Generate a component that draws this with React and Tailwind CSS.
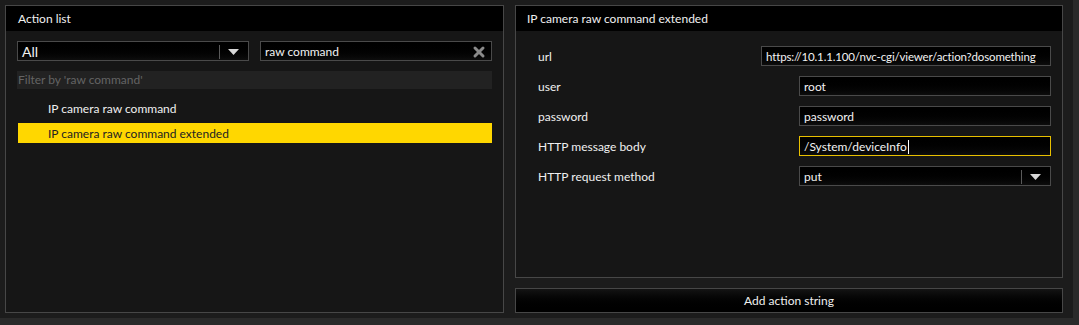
import { X } from "lucide-react";

const font = { fontFamily: 'Lato, "Noto Sans", sans-serif' };

function Caret() {
  return (
    <svg width="11" height="6" viewBox="0 0 11 6" className="block">
      <path d="M0 0 H11 L5.5 6 Z" fill="#d8d8d8" />
    </svg>
  );
}

function Field({ label, children }) {
  return (
    <div className="flex items-center h-[20px] mb-[10px]">
      <span className="pl-[22px] flex-1 pt-[1px]">{label}</span>
      {children}
    </div>
  );
}

const inputCls =
  "h-[20px] border border-[#4a4a4a] bg-gradient-to-b from-[#000] to-[#0d0d0d] flex items-center px-[4px] pt-[1px] text-[#f2f2f2] whitespace-nowrap overflow-hidden";

export default function App() {
  return (
    <div
      className="w-[1079px] h-[325px] bg-[#1c1c1c] flex flex-col text-[12px] text-[#f0f0f0] overflow-hidden"
      style={font}
    >
      <div className="flex h-[318px]">
        {/* LEFT PANEL */}
        <div className="ml-[5px] mt-[5px] mb-[5px] w-[499px] border border-[#474747] bg-[#161616] flex flex-col">
          <div className="h-[25px] bg-black flex items-center pl-[12px] pt-[1px]">Action list</div>

          <div className="flex gap-[11px] pl-[11px] pr-[11px] mt-[10px]">
            <div className={`${inputCls} w-[233px] justify-between`}>
              <span className="text-[14px]">All</span>
              <div className="flex items-center h-full">
                <div className="w-px h-[14px] bg-[#5a5a5a] mr-[8px]" />
                <Caret />
                <div className="w-[5px]" />
              </div>
            </div>
            <div className={`${inputCls} w-[233px] justify-between`}>
              <span>raw command</span>
              <X size={16} strokeWidth={4.5} color="#8a8a8a" />
            </div>
          </div>

          <div className="mx-[11px] mt-[10px] h-[18px] bg-[#222222] flex items-center pl-[1px] text-[#646464]">
            Filter by 'raw command'
          </div>

          <div className="mx-[12px] mt-[9px] h-[20px] flex items-center pl-[30px] pt-[1px]">IP camera raw command</div>
          <div className="ml-[12px] mr-[11px] mt-[5px] h-[20px] bg-[#ffd700] flex items-center pl-[30px] pt-[1px] text-[#222]">
            IP camera raw command extended
          </div>
        </div>

        {/* RIGHT COLUMN */}
        <div className="ml-[11px] mt-[5px] w-[548px] flex flex-col">
          <div className="h-[273px] border border-[#474747] bg-[#161616] flex flex-col">
            <div className="h-[25px] bg-black flex items-center pl-[11px] pt-[1px]">IP camera raw command extended</div>
            <div className="pt-[15px] pr-[11px]">
              <Field label="url">
                <div className={`${inputCls} w-[290px] text-[11.5px] tracking-[-0.15px]`}>
                  https://10.1.1.100/nvc-cgi/viewer/action?dosomething
                </div>
              </Field>
              <Field label="user">
                <div className={`${inputCls} w-[252px]`}>root</div>
              </Field>
              <Field label="password">
                <div className={`${inputCls} w-[252px]`}>password</div>
              </Field>
              <Field label="HTTP message body">
                <div className={`${inputCls} w-[252px] border-[#e8c000]`}>
                  /System/deviceInfo
                  <span className="w-px h-[14px] bg-white ml-[1px]" />
                </div>
              </Field>
              <Field label="HTTP request method">
                <div className={`${inputCls} w-[252px] justify-between`}>
                  <span>put</span>
                  <div className="flex items-center h-full">
                    <div className="w-px h-[14px] bg-[#5a5a5a] mr-[8px]" />
                    <Caret />
                    <div className="w-[5px]" />
                  </div>
                </div>
              </Field>
            </div>
          </div>
          <button className="mt-[10px] h-[25px] border border-[#474747] bg-gradient-to-b from-[#141414] to-[#000] text-[#f0f0f0]">
            Add action string
          </button>
        </div>

        <div className="flex-1" />
        <div className="w-[6px] bg-[#2a2a2a]" />
      </div>
      <div className="h-[7px] bg-[#2a2a2a]" />
    </div>
  );
}
